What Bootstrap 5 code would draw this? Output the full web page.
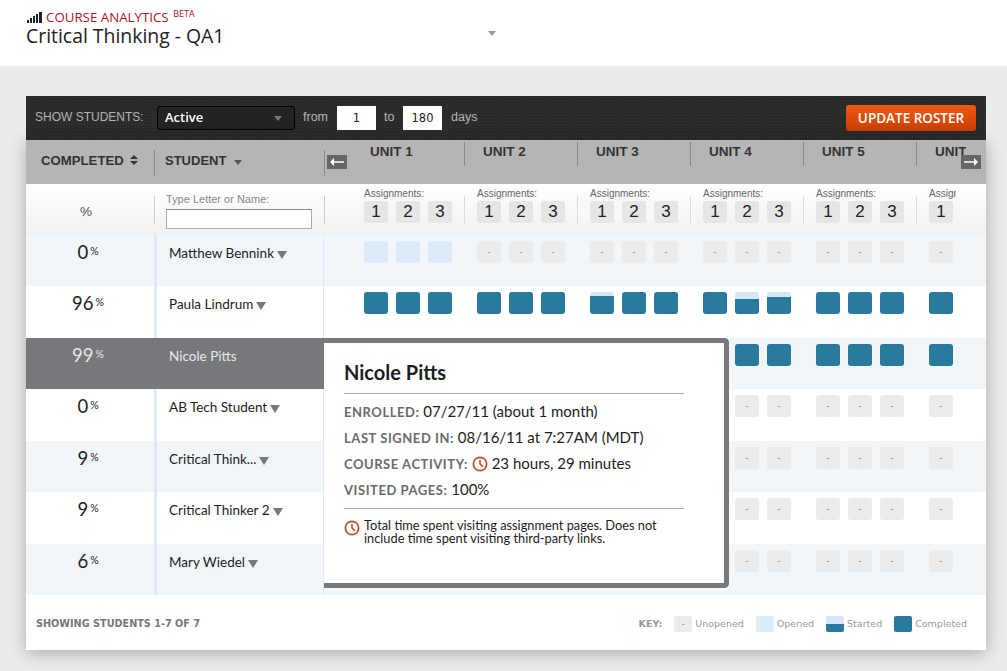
<!DOCTYPE html>
<html lang="en">
<head>
  <meta charset="UTF-8" />
  <meta name="viewport" content="width=device-width, initial-scale=1.0"/>
  <title>Course Analytics</title>
  <link rel="stylesheet" href="https://cdn.jsdelivr.net/npm/bootstrap@5.3.2/dist/css/bootstrap.min.css"/>
  <style>
    body { background: #ebebeb; font-family: "Liberation Sans", Arial, sans-serif; height: 671px; overflow: hidden; }
    .top-head { background: #fff; height: 66px; padding: 9.5px 26px 0; font-family: "Open Sans", sans-serif; }
    .app-name { color: #b3121d; font-size: 13.3px; line-height: 15px; height: 15px; }
    .app-name sup { font-size: 9px; top: -5px; margin-left: 1px; vertical-align: baseline; position: relative; }
    .course-name { color: #222; font-size: 19.4px; line-height: 21px; width: 462px; }
    .tri { display: inline-block; width: 0; height: 0; border-left: 4px solid transparent; border-right: 4px solid transparent; border-top: 5px solid #555; }
    .tri-page { border-top-color: #999; margin-top: -3px; }
    .panel-wrap { margin: 30px 21px 0 26px; width: 960px; }
    .tool-bar { background-color: #2a2a2a; background-image: radial-gradient(#363636 .6px, transparent .6px); background-size: 3px 3px; height: 44px; padding: 10px 10px 0 9px; color: #b4b4b4; font-size: 12.5px; }
    .show-label { width: 122px; font-size: 12px; line-height: 23px; }
    .status-btn { width: 138px; height: 24px; background: #232323; border: 1px solid #000; border-radius: 3px; color: #fff; font-family: "Open Sans", sans-serif; font-size: 13px; font-weight: 600; padding: 0 12px 0 7px; }
    .status-btn:hover { background: #232323; color: #fff; }
    .tri-dark { border-top-color: #777; }
    .day-input { width: 39px; height: 24px; border: 0; border-radius: 0; padding: 0; text-align: center; font-size: 11.5px; color: #222; font-family: "DejaVu Sans", sans-serif; }
    .lbl-from { margin: 0 8px; width: 26px; line-height: 23px; }
    .lbl-to { margin: 0 8px; width: 11px; line-height: 23px; }
    .lbl-days { margin-left: 9px; line-height: 23px; }
    .update-btn { width: 130px; height: 26px; margin-top: -1px; padding: 0; background: linear-gradient(#ee5a10, #c93f00); border: 0; border-radius: 3px; color: #fff; font-family: "Open Sans", sans-serif; font-size: 13.5px; font-weight: 600; line-height: 26px; }
    .update-btn:hover { background: linear-gradient(#ee5a10, #c93f00); color: #fff; }
    .panel-body { background: #fff; box-shadow: 0 3px 16px rgba(0,0,0,.28); }
    .col-done { flex: 0 0 128px; width: 128px; }
    .col-name { flex: 0 0 170px; width: 170px; }
    .col-gutter { flex: 0 0 27px; width: 27px; }
    .unit-strip { width: 605px; overflow: hidden; }
    .unit-strip-head { width: 615px; }
    .unit-col { flex: 0 0 113px; width: 113px; }
    .head-row { background: #b5b5b5; height: 44px; color: #333; font-size: 13px; font-weight: 700; }
    .head-cell { height: 26px; margin-top: 10px; line-height: 22px; box-shadow: 1px 0 0 #8b8b8b; }
    .head-done { padding-left: 15px; font-size: 13.2px; }
    .head-name { padding-left: 11px; }
    .sort-ico { display: inline-block; vertical-align: 0; margin-left: 3px; }
    .unit-head { height: 24px; margin-top: 2px; padding-left: 19px; font-size: 13.5px; line-height: 20px; position: relative; white-space: nowrap; }
    .unit-head::after { content: ""; position: absolute; right: -1px; top: 0; height: 24px; border-right: 1px solid #8b8b8b; }
    .move-btn { width: 20px; height: 14px; background: #666; display: flex; align-items: center; justify-content: center; margin: 15px 0 0 3px; }
    .move-right { position: absolute; left: 935px; top: 15px; margin: 0; }
    .sub-row { height: 51px; background: linear-gradient(#fff, #f1f1f1); }
    .sub-done { height: 28px; margin-top: 12px; box-shadow: 1px 0 0 #ccc; text-align: center; font-size: 13.5px; color: #555; line-height: 32px; padding-right: 8px; }
    .sub-name { height: 28px; margin-top: 12px; box-shadow: 1px 0 0 #ccc; position: relative; }
    .find-label { position: absolute; left: 12px; top: -4px; font-size: 11px; color: #888; line-height: 14px; white-space: nowrap; }
    .find-input { position: absolute; left: 12px; top: 13px; width: 146px; height: 20px; border: 1px solid #aaa; border-top-color: #888; border-radius: 0; padding: 0; }
    .unit-sub { height: 51px; padding: 3px 0 0 13px; position: relative; }
    .unit-sub::after { content: ""; position: absolute; right: -1px; top: 12px; height: 28px; border-right: 1px solid #ddd; }
    .assign-label { font-size: 10px; color: #666; line-height: 13px; margin-bottom: 1px; white-space: nowrap; }
    .cells { display: flex; gap: 8px; }
    .num-cell { width: 24px; height: 22px; background: #e6e6e6; border-radius: 3px; text-align: center; font-size: 17px; line-height: 22px; color: #222; }
    .data-row { height: 51.43px; }
    .row-tint { background: #f1f6fb; }
    .row-open { background: #fff; }
    .row-picked .col-done, .row-picked .col-name { background: #77787b; color: #f0f0f0; border-color: #77787b; }
    .row-picked .pct-num, .row-picked .pct-sign { color: #e6e6e6; }
    .row-picked .student { color: #e8e8e8; }
    .data-done { padding: 5px 4px 0 0; text-align: center; font-family: "Lato", sans-serif; }
    .pct-num { font-size: 18.5px; line-height: 24px; color: #222; }
    .pct-sign { font-size: 10.5px; color: #222; vertical-align: 4px; margin-left: 2px; }
    .data-name { border-left: 3px solid #dfeaf6; border-right: 1px solid #dfeaf6; padding: 5px 0 0 12px; font-family: "Lato", sans-serif; }
    .student { font-size: 13.5px; line-height: 20px; color: #1d1d1d; }
    .tri-name { border-left-width: 5px; border-right-width: 5px; border-top: 8px solid #777; margin-left: 3px; vertical-align: -1px; }
    .unit-data { padding: 6px 0 0 13px; }
    .grade { width: 24px; height: 22px; border-radius: 3px; font-size: 10px; color: #999; text-align: center; line-height: 22px; overflow: hidden; }
    .grade-none { background: #ececec; }
    .grade-open { background: #dceafa; }
    .grade-done { background: #2a7a9e; }
    .grade-part { background: linear-gradient(#d5e6f7 var(--part), #2a7a9e var(--part)); }
    .student-card { position: absolute; left: 298px; top: 198px; width: 405px; height: 250px; background: #fff; border: 5px solid #77787b; border-left: 0; border-radius: 0 5px 5px 0; padding: 10px 40px 0 20px; font-family: "Lato", sans-serif; color: #1d1d1d; }
    .card-name { font-size: 20px; font-weight: 700; line-height: 30px; margin: 4px 0 6px; }
    .card-rule { margin: 0; border: 0; border-top: 1px solid #aaa; opacity: 1; }
    .card-line { font-size: 15px; line-height: 26px; height: 26px; white-space: nowrap; }
    .card-line b { font-size: 13px; color: #6a6b6e; font-weight: 700; letter-spacing: .55px; }
    .card-lines { padding: 4px 0 6px; }
    .card-note { font-size: 12.8px; line-height: 13px; padding-left: 20px; margin-top: 10px; position: relative; }
    .card-note svg { position: absolute; left: 0; top: 1px; }
    .foot-row { height: 55px; padding: 3px 19px 0 10px; font-family: "DejaVu Sans", sans-serif; font-size: 9.5px; color: #999; }
    .foot-count { font-weight: 700; color: #777; font-size: 9.7px; }
    .key-label { font-weight: 700; margin-right: 12px; }
    .swatch { width: 18px; height: 16px; border-radius: 2px; font-size: 9px; line-height: 16px; margin-right: 3px; display: inline-block; text-align: center; }
    .key-item { margin-right: 12px; }
    .key-item:last-child { margin-right: 0; }
  </style>
</head>
<body>
  <div class="top-head">
    <div class="app-name d-flex align-items-center">
      <svg width="16" height="11" viewBox="0 0 16 11" class="me-1"><g fill="#222"><rect x="1" y="8" width="2" height="3"/><rect x="4" y="6" width="2" height="5"/><rect x="7" y="4" width="2" height="7"/><rect x="10" y="2" width="2" height="9"/><rect x="13" y="0" width="3" height="11"/></g></svg>
      <span>COURSE ANALYTICS <sup>BETA</sup></span>
    </div>
    <div class="d-flex align-items-center">
      <div class="course-name">Critical Thinking - QA1</div>
      <span class="tri tri-page"></span>
    </div>
  </div>

  <div class="panel-wrap">
    <div class="tool-bar d-flex align-items-start">
      <span class="show-label">SHOW STUDENTS:</span>
      <button type="button" class="btn status-btn d-flex align-items-center justify-content-between">Active <span class="tri tri-dark"></span></button>
      <span class="lbl-from">from</span>
      <input class="form-control day-input" type="text" value="1">
      <span class="lbl-to">to</span>
      <input class="form-control day-input" type="text" value="180">
      <span class="lbl-days">days</span>
      <button type="button" class="btn update-btn ms-auto">UPDATE ROSTER</button>
    </div>

    <div class="panel-body position-relative">
      <div class="head-row d-flex position-relative">
        <div class="col-done head-cell head-done">COMPLETED <svg class="sort-ico" width="8" height="10" viewBox="0 0 8 10"><path d="M4 0l4 4H0zM4 10L0 6h8z" fill="#333"/></svg></div>
        <div class="col-name head-cell head-name">STUDENT <span class="tri ms-1"></span></div>
        <div class="col-gutter"><div class="move-btn"><svg width="14" height="8" viewBox="0 0 14 8"><path d="M14 3.2v1.6H4V8L0 4l4-4v3.2z" fill="#fff"/></svg></div></div>
        <div class="unit-strip unit-strip-head d-flex" id="unitHeads"></div>
        <div class="move-btn move-right"><svg width="14" height="8" viewBox="0 0 14 8"><path d="M0 3.2v1.6h10V8l4-4-4-4v3.2z" fill="#fff"/></svg></div>
      </div>

      <div class="sub-row d-flex">
        <div class="col-done sub-done">%</div>
        <div class="col-name sub-name">
          <label class="find-label" for="findStudent">Type Letter or Name:</label>
          <input class="form-control find-input" id="findStudent" type="text">
        </div>
        <div class="col-gutter"></div>
        <div class="unit-strip d-flex" id="unitSubs"></div>
      </div>

      <div id="studentRows"></div>

      <div class="student-card">
        <div class="card-name">Nicole Pitts</div>
        <hr class="card-rule">
        <div class="card-lines">
          <div class="card-line"><b>ENROLLED:</b> 07/27/11 (about 1 month)</div>
          <div class="card-line"><b>LAST SIGNED IN:</b> 08/16/11 at 7:27AM (MDT)</div>
          <div class="card-line"><b>COURSE ACTIVITY:</b>
            <svg width="16" height="16" viewBox="0 0 16 16" class="align-text-bottom"><circle cx="8" cy="8" r="6.7" fill="none" stroke="#c4492c" stroke-width="1.7"/><path d="M8 3.8V8l3 2.6" fill="none" stroke="#c4492c" stroke-width="1.6"/></svg>
            23 hours, 29 minutes</div>
          <div class="card-line"><b>VISITED PAGES:</b> 100%</div>
        </div>
        <hr class="card-rule">
        <div class="card-note">
          <svg width="16" height="16" viewBox="0 0 16 16"><circle cx="8" cy="8" r="6.7" fill="none" stroke="#c4492c" stroke-width="1.7"/><path d="M8 3.8V8l3 2.6" fill="none" stroke="#c4492c" stroke-width="1.6"/></svg>
          Total time spent visiting assignment pages. Does not include time spent visiting third-party links.
        </div>
      </div>

      <div class="foot-row d-flex align-items-center justify-content-between">
        <span class="foot-count">SHOWING STUDENTS 1-7 OF 7</span>
        <div class="d-flex align-items-center">
          <span class="key-label">KEY:</span>
          <span class="key-item d-flex align-items-center"><span class="swatch grade-none">-</span>Unopened</span>
          <span class="key-item d-flex align-items-center"><span class="swatch grade-open"></span>Opened</span>
          <span class="key-item d-flex align-items-center"><span class="swatch grade-part" style="--part: 50%"></span>Started</span>
          <span class="key-item d-flex align-items-center"><span class="swatch grade-done"></span>Completed</span>
        </div>
      </div>
    </div>
  </div>

  <script>
    const units = [1, 2, 3, 4, 5, 6];
    const students = [
      { pct: 0, name: "Matthew Bennink", tint: true, fill: "open" },
      { pct: 96, name: "Paula Lindrum", fill: "done", part: { "3-0": 20, "4-1": 30, "4-2": 25 } },
      { pct: 99, name: "Nicole Pitts", tint: true, picked: true, fill: "done" },
      { pct: 0, name: "AB Tech Student", covered: true },
      { pct: 9, name: "Critical Think...", tint: true, covered: true },
      { pct: 9, name: "Critical Thinker 2", covered: true },
      { pct: 6, name: "Mary Wiedel", tint: true, covered: true }
    ];

    function celda(alumno, unidad, i) {
      const parte = alumno.part && alumno.part[unidad + "-" + i];
      if (parte) return `<div class="grade grade-part" style="--part: ${parte}%"></div>`;
      if (alumno.fill === "done") return '<div class="grade grade-done"></div>';
      if (alumno.fill === "open" && unidad === 1) return '<div class="grade grade-open"></div>';
      // the student card sits over these cells
      if (alumno.covered && (unidad < 4 || (unidad === 4 && i === 0))) return '<div class="grade grade-none"></div>';
      return '<div class="grade grade-none">-</div>';
    }

    document.getElementById("unitHeads").innerHTML = units.map(u =>
      `<div class="unit-col unit-head">UNIT ${u}</div>`).join("");

    document.getElementById("unitSubs").innerHTML = units.map(() => `
      <div class="unit-col unit-sub">
        <div class="assign-label">Assignments:</div>
        <div class="cells"><div class="num-cell">1</div><div class="num-cell">2</div><div class="num-cell">3</div></div>
      </div>`).join("");

    document.getElementById("studentRows").innerHTML = students.map(al => `
      <div class="data-row d-flex ${al.tint ? "row-tint" : "row-open"} ${al.picked ? "row-picked" : ""}">
        <div class="col-done data-done"><span class="pct-num">${al.pct}</span><span class="pct-sign">%</span></div>
        <div class="col-name data-name"><span class="student">${al.name}</span>${al.picked ? "" : '<span class="tri tri-name"></span>'}</div>
        <div class="col-gutter"></div>
        <div class="unit-strip d-flex">${units.map(u => `
          <div class="unit-col unit-data cells">${[0, 1, 2].map(i => celda(al, u, i)).join("")}</div>`).join("")}
        </div>
      </div>`).join("");
  </script>
</body>
</html>
